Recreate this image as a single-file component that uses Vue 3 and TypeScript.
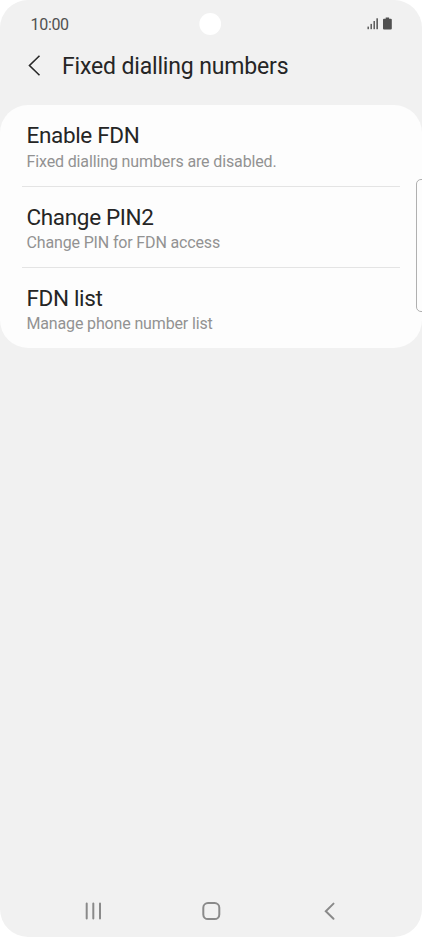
<script setup lang="ts">
interface SettingItem {
  title: string
  summary: string
}

const time = '10:00'
const heading = 'Fixed dialling numbers'
const items: SettingItem[] = [
  { title: 'Enable FDN', summary: 'Fixed dialling numbers are disabled.' },
  { title: 'Change PIN2', summary: 'Change PIN for FDN access' },
  { title: 'FDN list', summary: 'Manage phone number list' },
]
</script>

<template>
  <div class="phone">
    <header class="status">
      <span class="time">{{ time }}</span>
      <svg class="camera" viewBox="0 0 24 24" width="24" height="24">
        <circle cx="12.2" cy="12" r="10.9" fill="#fff" />
      </svg>
      <svg class="indicators" viewBox="0 0 26 14" width="26" height="14">
        <g fill="#505050">
          <rect x="0.5" y="9.6" width="1.4" height="2.6" />
          <rect x="3.5" y="6.9" width="1.4" height="5.3" />
          <rect x="6.5" y="4" width="1.4" height="8.2" />
          <rect x="9.4" y="1.3" width="1.5" height="10.9" />
          <path d="M18.7 0.5h3.4v1.2h1.700a1 1 0 0 1 1 1V11.600a1 1 0 0 1-1 1h-6.800a1 1 0 0 1-1-1V2.700a1 1 0 0 1 1-1h1.700z" />
        </g>
      </svg>
    </header>

    <div class="titlebar">
      <svg class="back" viewBox="0 0 14 22" width="14" height="22">
        <path d="M12.5 0.8L2.5 10.5L12.5 20.2" fill="none" stroke="#282828" stroke-width="1.6" />
      </svg>
      <h1>{{ heading }}</h1>
    </div>

    <main class="card">
      <section v-for="item in items" :key="item.title" class="item">
        <h2>{{ item.title }}</h2>
        <p>{{ item.summary }}</p>
      </section>
    </main>

    <nav class="nav">
      <svg viewBox="0 0 20 20" width="20" height="20">
        <path d="M3.7 2.5V17.5M10.3 2.5V17.5M17 2.5V17.5" fill="none" stroke="#8a8a8a" stroke-width="2" stroke-linecap="round" />
      </svg>
      <svg viewBox="0 0 20 20" width="20" height="20">
        <rect x="1.3" y="2.1" width="16" height="16" rx="4.7" fill="none" stroke="#8a8a8a" stroke-width="2" />
      </svg>
      <svg viewBox="0 0 20 20" width="20" height="20">
        <path d="M13.5 2.6L5.8 10.2L13.5 17.8" fill="none" stroke="#8a8a8a" stroke-width="2" stroke-linecap="round" />
      </svg>
    </nav>

    <div class="edge-handle"></div>
  </div>
</template>

<style>
body {
  margin: 0;
  background: #fff;
}
</style>

<style scoped>
.phone {
  position: relative;
  display: flex;
  flex-direction: column;
  box-sizing: border-box;
  width: 422px;
  height: 937px;
  overflow: hidden;
  border-radius: 28px;
  background: #f1f1f1;
  font-family: Roboto, "Liberation Sans", sans-serif;
  color: #252525;
}

.status {
  display: grid;
  grid-template-columns: 1fr 24px 1fr;
  align-items: center;
  height: 47px;
  padding: 0 30px 0 27px;
}

.time {
  padding-top: 1px;
  padding-left: 3.6px;
  font-size: 16px;
  letter-spacing: -0.35px;
  color: #505050;
}

.indicators {
  justify-self: end;
  margin-right: -1px;
}

.titlebar {
  display: flex;
  align-items: center;
  gap: 21px;
  height: 38px;
  padding-left: 27px;
}

h1,
h2,
p {
  margin: 0;
  font-weight: 400;
  white-space: nowrap;
}

h1 {
  padding-top: 2px;
  font-size: 23px;
  line-height: 36px;
  letter-spacing: -0.16px;
}

.card {
  display: flex;
  flex-direction: column;
  height: 243.5px;
  margin-top: 19.7px;
  border-radius: 28px;
  background: #fdfdfd;
}

.item {
  box-sizing: border-box;
  height: 81.3px;
  margin: 0 22px;
  padding: 16.5px 0 0 4.5px;
}

.item + .item {
  height: 81px;
  padding-top: 16.3px;
  border-top: 1px solid #e4e4e4;
}

h2 {
  font-size: 22.5px;
  line-height: 28px;
  letter-spacing: -0.34px;
}

p {
  padding-top: 1px;
  font-size: 16px;
  line-height: 22px;
  letter-spacing: -0.15px;
  color: #929292;
}

.item:first-child p {
  padding-top: 1.5px;
  letter-spacing: -0.13px;
}

.nav {
  display: flex;
  justify-content: space-between;
  margin-top: auto;
  padding: 0 82px 16px 83px;
}

.edge-handle {
  position: absolute;
  top: 179px;
  right: -6px;
  box-sizing: border-box;
  width: 12px;
  height: 133px;
  border: 1px solid #b0b0b0;
  border-radius: 5px;
}
</style>
